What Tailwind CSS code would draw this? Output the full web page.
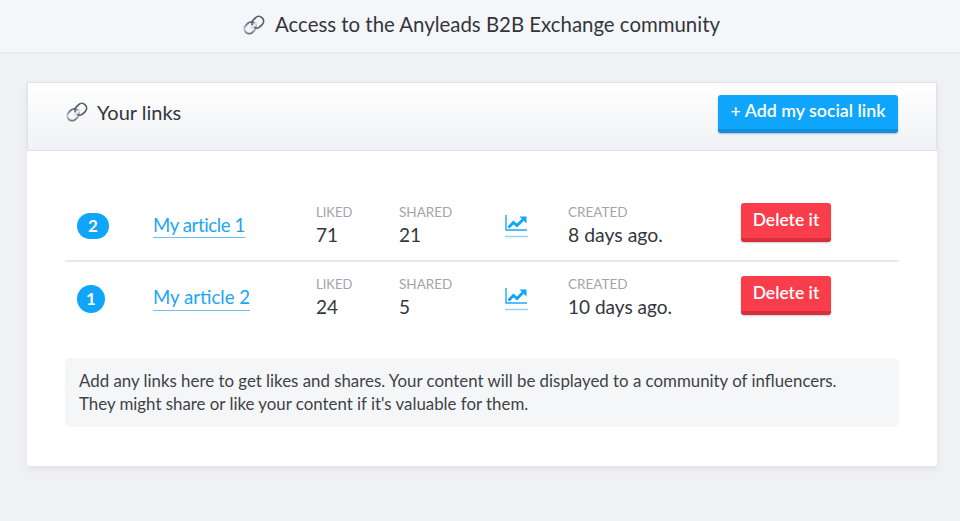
<!DOCTYPE html>
<html lang="en">
<head>
  <meta charset="UTF-8" />
  <title>Your links</title>
  <script src="https://cdn.jsdelivr.net/npm/@tailwindcss/browser@4"></script>
</head>
<body class="bg-[#f0f1f4] h-[521px] overflow-hidden font-['Lato','Open_Sans',sans-serif] text-[#33363b]">

  <!-- Shared icons -->
  <svg class="block w-0 h-0">
    <defs>
      <linearGradient id="chain" x1="0" y1="1" x2="1" y2="0">
        <stop offset="0" stop-color="#59626c" />
        <stop offset="0.45" stop-color="#b9c6d4" />
        <stop offset="1" stop-color="#4f5862" />
      </linearGradient>
      <symbol id="link-icon" viewBox="0 0 22 22">
        <rect x="1" y="9" width="12.5" height="9.5" rx="4.75" transform="rotate(-45 7.25 13.75)" fill="none" stroke="url(#chain)" stroke-width="2" />
        <rect x="8.5" y="3.5" width="12.5" height="9.5" rx="4.75" transform="rotate(-45 14.75 8.25)" fill="none" stroke="#59626c" stroke-width="1.8" />
        <path d="M8 14.5l6-6" stroke="#dbe3eb" stroke-width="2.6" />
      </symbol>
      <symbol id="chart-icon" viewBox="0 0 23 24">
        <path d="M1 1v15h21" fill="none" stroke="#1ea7f5" stroke-width="1.4" />
        <path d="M3.5 13.5l5-5 3.5 3 6-6" fill="none" stroke="#0ea5fb" stroke-width="2.8" />
        <path d="M14.5 2.5h7v7z" fill="#0ea5fb" />
        <path d="M0 22.5h23" stroke="#8fd0f7" stroke-width="1.4" />
      </symbol>
    </defs>
  </svg>

  <!-- Top bar -->
  <header class="h-[54px] bg-[#f5f6f9] border-b-2 border-[#e9eaef] flex items-center justify-center gap-[10px] pl-[3px] pb-[3px]">
    <svg class="w-[22px] h-[22px]"><use href="#link-icon" /></svg>
    <h1 class="text-[20.4px] leading-none">Access to the Anyleads B2B Exchange community</h1>
  </header>

  <!-- Card -->
  <main class="mt-[28px] mx-[27px] w-[910px] h-[384px] bg-white rounded-[3px] shadow-[0_3px_6px_rgba(40,50,70,0.08)]">
    <div class="h-[69px] border border-[#dfe1e6] bg-gradient-to-b from-white to-[#f1f2f5] flex items-center justify-between pl-[38px] pr-[38px]">
      <div class="flex items-center gap-[9px] -mt-[10px]">
        <svg class="w-[22px] h-[22px]"><use href="#link-icon" /></svg>
        <h2 class="text-[20px] leading-none">Your links</h2>
      </div>
      <button class="w-[180px] h-[38px] -mt-[6px] pb-[1px] bg-[#0ea5fb] border-b-[4px] border-[#0c8fdc] rounded-[3px] text-white text-[17.8px] font-semibold leading-none shadow-[0_1px_2px_rgba(0,0,0,0.25)]">+ Add my social link</button>
    </div>

    <div class="px-[38px] pt-[38px]">
      <!-- Row 1 -->
      <div class="h-[73px] border-b-2 border-[#e8e9eb] flex items-center pt-[3px]">
        <span class="ml-[12px] w-[32px] h-[26px] rounded-full bg-[#0ea5fb] text-white text-[17px] font-bold flex items-center justify-center">2</span>
        <div class="ml-[44px] w-[163px]"><a class="text-[18.6px] tracking-[-0.4px] text-[#1aa5f5] border-b border-[#6cc3f7] pb-[3px] leading-none inline-block">My article 1</a></div>
        <div class="w-[83px]">
          <div class="text-[13px] text-[#a1a5ab] leading-[17px]">LIKED</div>
          <div class="text-[19px] leading-[28px]">71</div>
        </div>
        <div class="w-[106px]">
          <div class="text-[13.5px] text-[#a1a5ab] leading-[17px]">SHARED</div>
          <div class="text-[19px] leading-[28px]">21</div>
        </div>
        <svg class="w-[23px] h-[24px] mr-[40px]"><use href="#chart-icon" /></svg>
        <div class="w-[173px]">
          <div class="text-[13.5px] text-[#a1a5ab] leading-[17px]">CREATED</div>
          <div class="text-[19.4px] leading-[28px]">8 days ago.</div>
        </div>
        <button class="w-[90px] h-[39px] -mt-[8px] pb-[1px] bg-[#fa3d4b] border-b-[4px] border-[#d92f3c] rounded-[3px] text-white text-[17.5px] font-semibold leading-none shadow-[0_1px_2px_rgba(0,0,0,0.2)]">Delete it</button>
      </div>
      <!-- Row 2 -->
      <div class="h-[73px] flex items-center">
        <span class="ml-[12px] w-[28px] h-[28px] rounded-full bg-[#0ea5fb] text-white text-[17px] font-bold flex items-center justify-center">1</span>
        <div class="ml-[48px] w-[163px]"><a class="text-[18.6px] text-[#1aa5f5] border-b border-[#6cc3f7] pb-[3px] leading-none inline-block">My article 2</a></div>
        <div class="w-[83px]">
          <div class="text-[13px] text-[#a1a5ab] leading-[17px]">LIKED</div>
          <div class="text-[19px] leading-[28px]">24</div>
        </div>
        <div class="w-[106px]">
          <div class="text-[13.5px] text-[#a1a5ab] leading-[17px]">SHARED</div>
          <div class="text-[19px] leading-[28px]">5</div>
        </div>
        <svg class="w-[23px] h-[24px] mr-[40px]"><use href="#chart-icon" /></svg>
        <div class="w-[173px]">
          <div class="text-[13.5px] text-[#a1a5ab] leading-[17px]">CREATED</div>
          <div class="text-[19px] leading-[28px]">10 days ago.</div>
        </div>
        <button class="w-[90px] h-[39px] -mt-[6px] pb-[1px] bg-[#fa3d4b] border-b-[4px] border-[#d92f3c] rounded-[3px] text-white text-[17.5px] font-semibold leading-none shadow-[0_1px_2px_rgba(0,0,0,0.2)]">Delete it</button>
      </div>

      <!-- Note -->
      <div class="mt-[23px] h-[69px] bg-[#f5f6f8] rounded-[5px] px-[14px] py-[11px] text-[16.85px] leading-[23px] text-[#3f4247]">
        <p>Add any links here to get likes and shares. Your content will be displayed to a community of influencers.</p>
        <p>They might share or like your content if it's valuable for them.</p>
      </div>
    </div>
  </main>

</body>
</html>
